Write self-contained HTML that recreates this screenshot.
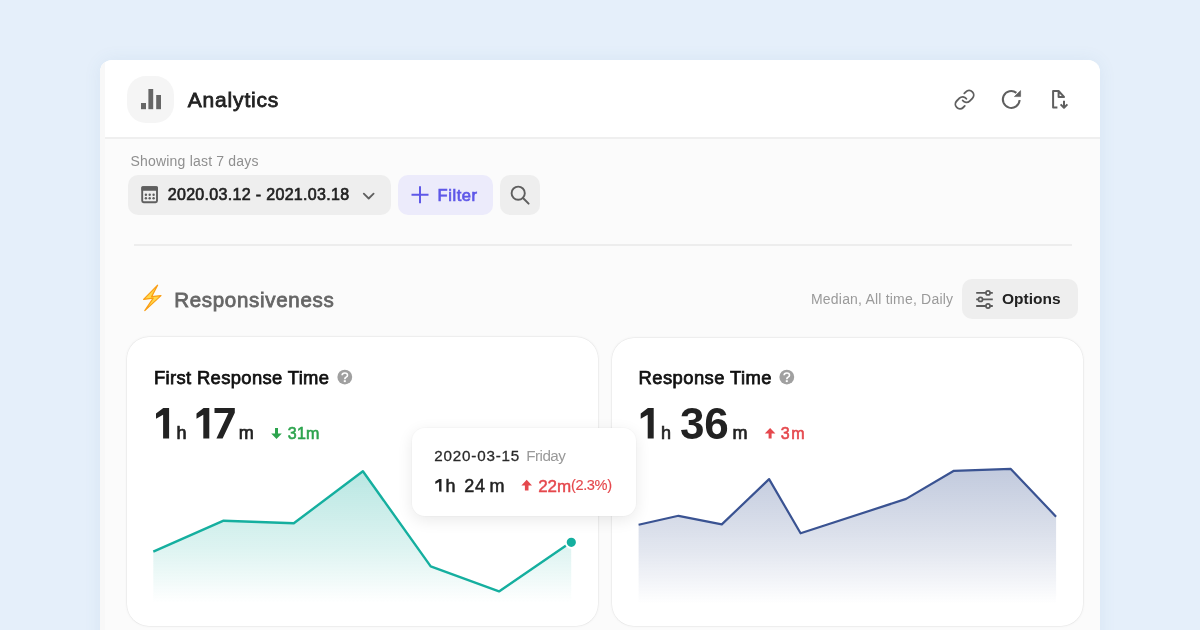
<!DOCTYPE html>
<html><head><meta charset="utf-8">
<style>
html,body{margin:0;padding:0;}
body{width:1200px;height:630px;overflow:hidden;background:#E5EFFA;position:relative;font-family:"Liberation Sans",sans-serif;}
.abs{position:absolute;}
#main{left:100px;top:60px;width:1000px;height:620px;background:#FBFBFB;border-radius:12px;overflow:hidden;box-shadow:0 0 18px rgba(60,110,170,0.08);}
#hdr{left:0;top:0;width:1000px;height:77px;background:#FFFFFF;border-bottom:2px solid #EFEFEF;}
#lstrip{left:0;top:0;width:4.5px;height:620px;background:#F8F8F8;}
.btn{background:#EEEEEE;border-radius:10px;}
.card{background:#FFFFFF;border-radius:22px;box-shadow:0 0 0 0.5px rgba(0,0,0,0.05), 0 0 3px rgba(0,0,0,0.08);}
#tip{left:412px;top:427.5px;width:224px;height:88px;background:#FFFFFF;border-radius:13px;box-shadow:0 4px 16px rgba(0,0,0,0.09),0 0 0 1px rgba(0,0,0,0.02);}
svg{position:absolute;left:0;top:0;will-change:transform;}
</style></head>
<body>
<div id="main" class="abs">
  <div id="hdr" class="abs"></div>
  <div id="lstrip" class="abs"></div>
</div>
<!-- icon box -->
<div class="abs" style="left:127px;top:76px;width:47px;height:47px;border-radius:19px;background:#F5F5F5;"></div>
<!-- buttons -->
<div class="abs btn" style="left:127.5px;top:175px;width:263px;height:39.5px;"></div>
<div class="abs" style="left:398px;top:175px;width:94.5px;height:39.5px;border-radius:10px;background:#ECEBFB;"></div>
<div class="abs btn" style="left:500px;top:175px;width:39.5px;height:39.5px;"></div>
<div class="abs" style="left:134px;top:244px;width:938px;height:1.8px;background:#EDEDED;"></div>
<div class="abs btn" style="left:962px;top:279.2px;width:116.3px;height:40.3px;"></div>
<!-- cards -->
<div class="abs card" style="left:127px;top:337px;width:471px;height:288.5px;"></div>
<div class="abs card" style="left:612px;top:337.5px;width:471px;height:288px;"></div>

<svg width="1200" height="630" font-family="Liberation Sans">
  <defs>
    <linearGradient id="tealFill" x1="0" y1="471" x2="0" y2="603" gradientUnits="userSpaceOnUse">
      <stop offset="0" stop-color="#15AF9F" stop-opacity="0.30"/>
      <stop offset="0.6" stop-color="#15AF9F" stop-opacity="0.14"/>
      <stop offset="1" stop-color="#15AF9F" stop-opacity="0"/>
    </linearGradient>
    <linearGradient id="navyFill" x1="0" y1="469" x2="0" y2="604" gradientUnits="userSpaceOnUse">
      <stop offset="0" stop-color="#334F8F" stop-opacity="0.30"/>
      <stop offset="0.6" stop-color="#334F8F" stop-opacity="0.14"/>
      <stop offset="1" stop-color="#334F8F" stop-opacity="0"/>
    </linearGradient>
  </defs>
  <!-- analytics bars -->
  <rect x="141" y="103" width="5" height="6.2" fill="#666"/>
  <rect x="148.4" y="89" width="4.8" height="20.2" fill="#666"/>
  <rect x="156.2" y="95" width="4.8" height="14.2" fill="#666"/>
  <text x="187.8" y="107" font-size="21" fill="#222" stroke="#222" stroke-width="0.8" textLength="90.5" lengthAdjust="spacing">Analytics</text>

  <!-- header icons -->
  <g fill="none" stroke="#5F5F5F" stroke-width="2" stroke-linecap="round" stroke-linejoin="round" transform="translate(953.5 88.6) scale(0.92)">
    <path d="M10 13a5 5 0 0 0 7.54.54l3-3a5 5 0 0 0-7.07-7.07l-1.72 1.71"/>
    <path d="M14 11a5 5 0 0 0-7.54-.54l-3 3a5 5 0 0 0 7.07 7.07l1.71-1.71"/>
  </g>
  <path d="M1019.6 100 A8.4 8.4 0 1 1 1016.4 92.9" fill="none" stroke="#5F5F5F" stroke-width="2"/>
  <path d="M1020.6 90.6 L1020.6 96.6 L1014.4 96.6 Z" fill="#5F5F5F" stroke="#5F5F5F" stroke-width="0.6" stroke-linejoin="round"/>
  <g fill="none" stroke="#5F5F5F" stroke-width="2" stroke-linejoin="round">
    <path d="M1057.4 107.6 H1053.1 V91 H1058.6 L1064 96.9 H1058.6 V91"/>
    <path d="M1064 100.7 V107.6 M1060.6 104.4 L1064 107.8 L1067.4 104.4"/>
  </g>

  <!-- showing -->
  <text x="130.5" y="165.6" font-size="14" fill="#8F8F8F" textLength="128" lengthAdjust="spacing">Showing last 7 days</text>
  <!-- calendar icon -->
  <rect x="142.2" y="187.2" width="14.8" height="15" rx="1.4" fill="none" stroke="#5F5F5F" stroke-width="1.9"/>
  <rect x="141.4" y="186.3" width="16.4" height="4.4" rx="1" fill="#5F5F5F"/>
  <g fill="#5F5F5F">
    <circle cx="145.9" cy="194.8" r="1.2"/><circle cx="149.7" cy="194.8" r="1.2"/><circle cx="153.6" cy="194.8" r="1.2"/>
    <circle cx="145.9" cy="198.3" r="1.2"/><circle cx="149.7" cy="198.3" r="1.2"/><circle cx="153.6" cy="198.3" r="1.2"/>
  </g>
  <text x="167.7" y="200.3" font-size="16" fill="#222" stroke="#222" stroke-width="0.65" textLength="181.5" lengthAdjust="spacing">2020.03.12 - 2021.03.18</text>
  <path d="M363.8 193.6 l4.9 4.9 l4.9 -4.9" fill="none" stroke="#5F5F5F" stroke-width="1.8" stroke-linecap="round" stroke-linejoin="round"/>
  <!-- filter -->
  <path d="M420 186.3 v17 M411.5 194.8 h17" stroke="#5F58E8" stroke-width="2"/>
  <text x="437.6" y="200.7" font-size="16.5" fill="#5F58E8" stroke="#5F58E8" stroke-width="0.7" textLength="39.5" lengthAdjust="spacing">Filter</text>
  <!-- search -->
  <circle cx="518.2" cy="193.2" r="6.6" fill="none" stroke="#5F5F5F" stroke-width="1.9"/>
  <path d="M523 198 l5.6 5.6" stroke="#5F5F5F" stroke-width="2" stroke-linecap="round"/>

  <!-- lightning -->
  <path d="M157.6 285.2 L143.6 299.4 L153.2 298.2 L144.8 310.6 L161 295.6 L151.6 296.6 Z" fill="#FFD84A" stroke="#FA9E14" stroke-width="1.2" stroke-linejoin="round"/>
  <text x="174.2" y="307.2" font-size="20.5" fill="#666" stroke="#666" stroke-width="0.8" textLength="159.5" lengthAdjust="spacing">Responsiveness</text>
  <text x="811" y="303.7" font-size="14" fill="#9A9A9A" textLength="142" lengthAdjust="spacing">Median, All time, Daily</text>
  <!-- sliders -->
  <g stroke="#5A5A5A" stroke-width="1.8" fill="none">
    <path d="M976.2 292.9 H985.9 M990.1 292.9 H992.8"/>
    <circle cx="988" cy="292.9" r="2.05" stroke-width="1.7"/>
    <path d="M976.2 299.4 H978.4 M982.6 299.4 H992.8"/>
    <circle cx="980.5" cy="299.4" r="2.05" stroke-width="1.7"/>
    <path d="M976.2 306 H985.9 M990.1 306 H992.8"/>
    <circle cx="988" cy="306" r="2.05" stroke-width="1.7"/>
  </g>
  <text x="1002" y="304.3" font-size="15.5" font-weight="700" fill="#222" textLength="58.6" lengthAdjust="spacing">Options</text>

  <!-- card1 -->
  <text x="154" y="383.6" font-size="18.4" fill="#111" stroke="#111" stroke-width="0.75" textLength="175" lengthAdjust="spacing">First Response Time</text>
  <circle cx="344.8" cy="377.1" r="7.4" fill="#A0A0A0"/>
  <path d="M342.1 375.3 C342.1 373.8 343.3 373 344.8 373 C346.4 373 347.5 373.9 347.5 375.2 C347.5 376.5 346.5 376.9 345.7 377.5 C345 378 344.8 378.4 344.8 379.3" fill="none" stroke="#fff" stroke-width="1.6"/>
  <rect x="343.8" y="380.2" width="2" height="1.9" fill="#fff"/>
  <path d="M156 413.4 L163.3 408.1 L169.1 408.1 L169.1 438.5 L163.1 438.5 L163.1 414.8 L156 418.8 Z" fill="#222"/>
  <text x="176.5" y="438.5" font-size="18" fill="#222" stroke="#222" stroke-width="0.7">h</text>
  <path d="M196.5 413.4 L203.6 408.1 L209.3 408.1 L209.3 438.5 L203.3 438.5 L203.3 414.8 L196.5 418.8 Z" fill="#222"/>
  <path d="M214.5 408.1 L234.8 408.1 L234.8 412.8 L222.6 438.5 L216.4 438.5 L228.4 413 L214.5 413 Z" fill="#222"/>
  <text x="238.8" y="438.5" font-size="18" fill="#222" stroke="#222" stroke-width="0.7">m</text>
  <path d="M275 428 H278 V433.5 H281.8 L276.5 439 L271.2 433.5 H275 Z" fill="#2DA44E"/>
  <text x="287.8" y="438.7" font-size="16" fill="#2DA44E" stroke="#2DA44E" stroke-width="0.6" textLength="31.5" lengthAdjust="spacing">31m</text>

  <path d="M153.3 551.7 L223.6 520.7 L293.8 523.3 L362.9 471.2 L430.7 566.4 L499 591.4 L571.2 542.1 L571.2 603 L153.3 603 Z" fill="url(#tealFill)"/>
  <path d="M153.3 551.7 L223.6 520.7 L293.8 523.3 L362.9 471.2 L430.7 566.4 L499 591.4 L571.2 542.1" fill="none" stroke="#15AF9F" stroke-width="2.4" stroke-linejoin="round"/>
  <circle cx="571.3" cy="542.3" r="5.55" fill="#15AF9F" stroke="#fff" stroke-width="1.9"/>

  <!-- card2 -->
  <text x="638.6" y="383.6" font-size="18.4" fill="#111" stroke="#111" stroke-width="0.75" textLength="133" lengthAdjust="spacing">Response Time</text>
  <circle cx="786.8" cy="377.1" r="7.4" fill="#A0A0A0"/>
  <path d="M784.1 375.3 C784.1 373.8 785.3 373 786.8 373 C788.4 373 789.5 373.9 789.5 375.2 C789.5 376.5 788.5 376.9 787.7 377.5 C787 378 786.8 378.4 786.8 379.3" fill="none" stroke="#fff" stroke-width="1.6"/>
  <rect x="785.8" y="380.2" width="2" height="1.9" fill="#fff"/>
  <path d="M640.7 413.4 L647.9 408.1 L653.7 408.1 L653.7 438.5 L647.7 438.5 L647.7 414.8 L640.7 418.8 Z" fill="#222"/>
  <text x="661" y="438.5" font-size="18" fill="#222" stroke="#222" stroke-width="0.7">h</text>
  <text x="679.9" y="438.5" font-size="44" font-weight="700" fill="#222">36</text>
  <text x="732.6" y="438.5" font-size="18" fill="#222" stroke="#222" stroke-width="0.7">m</text>
  <path d="M768.6 438.5 H771.6 V433.5 H775.4 L770.1 428 L764.8 433.5 H768.6 Z" fill="#E5484D"/>
  <text x="780.8" y="438.7" font-size="16" fill="#E5484D" stroke="#E5484D" stroke-width="0.6" textLength="23.8" lengthAdjust="spacing">3m</text>

  <path d="M638.6 524.7 L678.5 515.8 L721.8 524.4 L769.1 479.1 L800.6 533.3 L906.1 498.9 L953.9 470.8 L1010.8 468.9 L1056.1 516.7 L1056.1 604 L638.6 604 Z" fill="url(#navyFill)"/>
  <path d="M638.6 524.7 L678.5 515.8 L721.8 524.4 L769.1 479.1 L800.6 533.3 L906.1 498.9 L953.9 470.8 L1010.8 468.9 L1056.1 516.7" fill="none" stroke="#3A5392" stroke-width="2.2" stroke-linejoin="round"/>
</svg>

<div id="tip" class="abs"></div>
<svg width="1200" height="630" font-family="Liberation Sans">
  <text x="434.3" y="461.2" font-size="15.2" fill="#2A2A2A" stroke="#2A2A2A" stroke-width="0.3" textLength="85" lengthAdjust="spacing">2020-03-15</text>
  <text x="526.3" y="461.2" font-size="15.2" fill="#999" textLength="39.5" lengthAdjust="spacing">Friday</text>
  <path d="M435.3 481.6 L439.2 478.9 L441.5 478.9 L441.5 491.6 L439.1 491.6 L439.1 481.9 L435.3 483.9 Z" fill="#222"/>
  <g fill="#222" stroke="#222" stroke-width="0.5" font-size="18">
    <text x="445.6" y="491.6">h</text>
    <text x="464.3" y="491.6">2</text>
    <text x="475.1" y="491.6">4</text>
    <text x="489.6" y="491.6">m</text>
  </g>
  <path d="M524.9 490.6 H528.5 V485.6 H532 L526.7 479.8 L521.4 485.6 H524.9 Z" fill="#E5484D"/>
  <text x="538.2" y="491.6" font-size="17" fill="#E5484D" stroke="#E5484D" stroke-width="0.45" textLength="33" lengthAdjust="spacing">22m</text>
  <text x="571" y="490.4" font-size="14.6" fill="#E5484D" stroke="#E5484D" stroke-width="0.15" textLength="41" lengthAdjust="spacing">(2.3%)</text>
</svg>
</body></html>
